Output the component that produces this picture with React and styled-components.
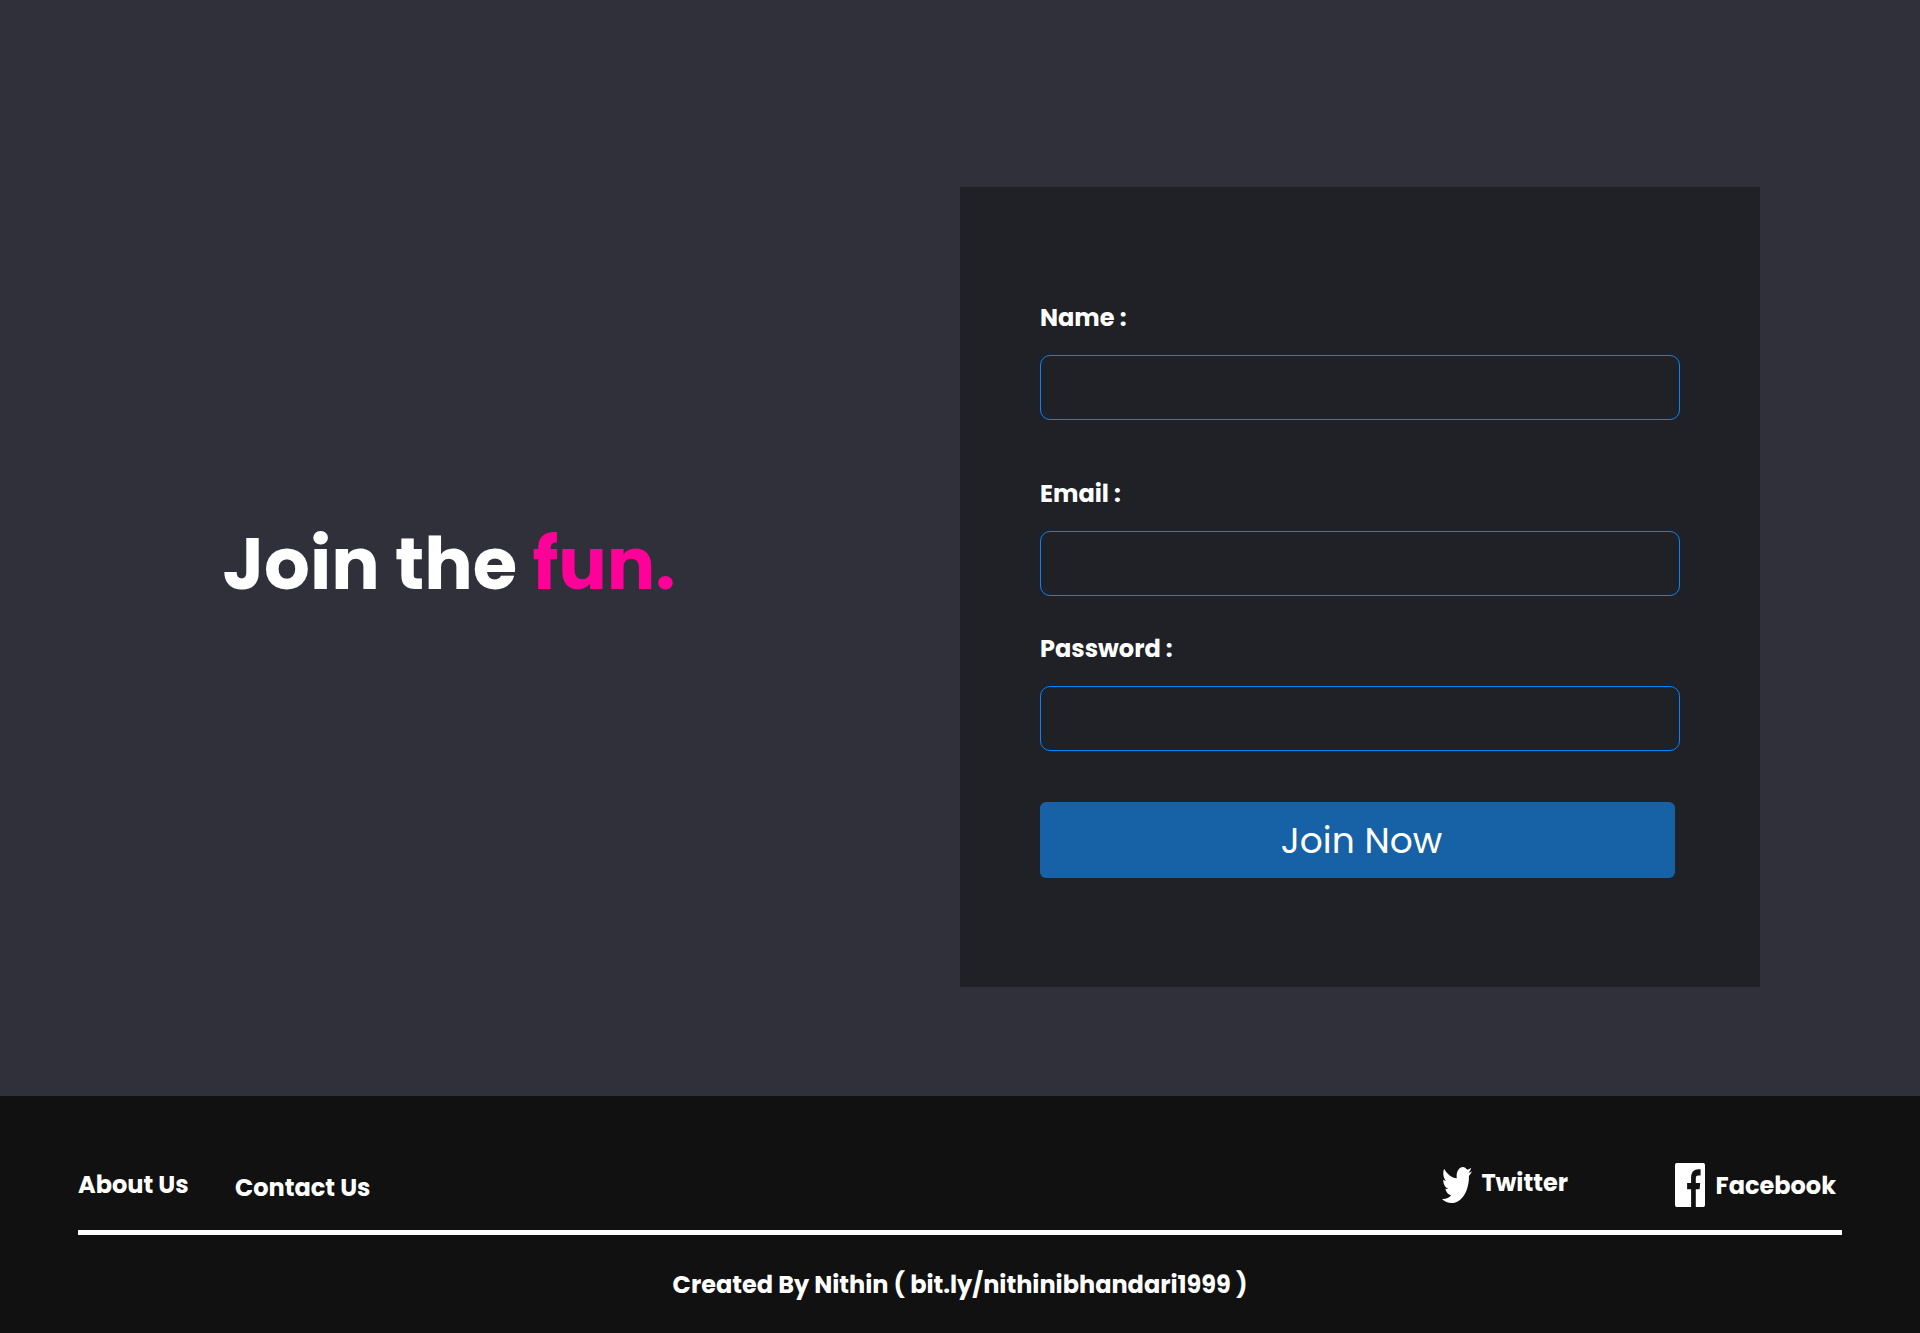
import React from 'react';
import styled, { createGlobalStyle } from 'styled-components';

const GlobalStyle = createGlobalStyle`
  * { box-sizing: border-box; }
  body { margin: 0; background: #30303a; }
`;

const Page = styled.div`
  width: 1920px;
  height: 1333px;
  display: flex;
  flex-direction: column;
  overflow: hidden;
  color: #fff;
  background: #30303a;
  font-family: Poppins, Inter, sans-serif;
  font-size: 24px;
  font-weight: 700;
  line-height: 36px;
`;

const Main = styled.main`
  height: 1096px;
  display: flex;
  align-items: flex-start;
  padding: 187px 160px 0 222.5px;
`;

const Headline = styled.h1`
  flex: 1;
  margin: 323px 0 0;
  font-size: 72px;
  font-weight: 700;
  line-height: 108px;
  white-space: nowrap;
`;

const Accent = styled.span`
  color: #ff0099;
`;

const Card = styled.form`
  width: 800px;
  height: 800px;
  padding: 113px 80px 0;
  background: #202126;
`;

const Field = styled.label`
  display: flex;
  flex-direction: column;
  gap: 19px;
  margin-bottom: ${(p) => p.$after}px;
`;

const Input = styled.input`
  width: 100%;
  height: 65px;
  padding: 0 20px;
  color: #fff;
  font: inherit;
  background: transparent;
  border: 1px solid #0085ff;
  border-radius: 10px;
  outline: none;
`;

const Submit = styled.button`
  display: block;
  width: 635px;
  height: 76px;
  padding: 2px 0 0 8px;
  border: 0;
  border-radius: 6px;
  color: #fff;
  background: #1762a7;
  font-family: inherit;
  font-size: 36px;
  font-weight: 400;
  line-height: 54px;
`;

const Footer = styled.footer`
  flex: 1;
  display: flex;
  flex-direction: column;
  padding: 0 78px;
  background: #111111;
`;

const FooterRow = styled.div`
  height: 134px;
  display: flex;
  align-items: flex-start;
  justify-content: space-between;
  padding-right: 6px;
`;

const Group = styled.nav`
  display: flex;
  align-items: flex-start;
  gap: ${(p) => p.$gap}px;
`;

const Link = styled.a`
  display: flex;
  align-items: flex-start;
  gap: ${(p) => p.$gap || 0}px;
  padding-top: ${(p) => p.$top}px;
  white-space: nowrap;

  svg {
    display: block;
    flex: none;
    margin-top: ${(p) => p.$iconTop || 0}px;
  }
`;

const LinkText = styled.span`
  padding-top: ${(p) => p.$top}px;
`;

const Rule = styled.hr`
  width: 100%;
  height: 5px;
  margin: 0;
  border: 0;
  background: #fff;
`;

const Credit = styled.p`
  margin: 32px 0 0;
  text-align: center;
`;

const TwitterIcon = () => (
  <svg width="30" height="36" viewBox="0 48 512 416" preserveAspectRatio="none" fill="#fff">
    <path d="M459.37 151.716c.325 4.548.325 9.097.325 13.645 0 138.72-105.583 298.558-298.558 298.558-59.452 0-114.68-17.219-161.137-47.106 8.447.974 16.568 1.299 25.34 1.299 49.055 0 94.213-16.568 130.274-44.832-46.132-.975-84.792-31.188-98.112-72.772 6.498.974 12.995 1.624 19.818 1.624 9.421 0 18.843-1.3 27.614-3.573-48.081-9.747-84.143-51.98-84.143-102.985v-1.299c13.969 7.797 30.214 12.67 47.431 13.319-28.264-18.843-46.781-51.005-46.781-87.391 0-19.492 5.197-37.36 14.294-52.954 51.655 63.675 129.3 105.258 216.365 109.807-1.624-7.797-2.599-15.918-2.599-24.04 0-57.828 46.782-104.934 104.934-104.934 30.213 0 57.502 12.67 76.67 33.137 23.715-4.548 46.456-13.32 66.599-25.34-7.798 24.366-24.366 44.833-46.132 57.827 21.117-2.273 41.584-8.122 60.426-16.243-14.292 20.791-32.161 39.308-52.628 54.253z" />
  </svg>
);

const FacebookIcon = () => (
  <svg width="30" height="44" viewBox="0 0 30 44" fill="#fff">
    <path d="M1.6 0H28.4Q30 0 30 2V42Q30 44 28.4 44H20.8V26.2H24.6L25.2 19.9H20.8V16.2C20.8 13.6 21.3 12.6 23.2 12.6H25.6V6.3C20 5.4 16.1 8 16.1 14.8V19.9H12.1V26.2H16.1V44H1.6Q0 44 0 42V2Q0 0 1.6 0Z" />
  </svg>
);

const fields = [
  { label: 'Name :', type: 'text', after: 56 },
  { label: 'Email :', type: 'email', after: 35 },
  { label: 'Password :', type: 'password', after: 51 },
];

export default function App() {
  return (
    <Page>
      <GlobalStyle />
      <Main>
        <Headline>
          Join the <Accent>fun.</Accent>
        </Headline>
        <Card>
          {fields.map((f) => (
            <Field key={f.label} $after={f.after}>
              {f.label}
              <Input type={f.type} />
            </Field>
          ))}
          <Submit type="button">Join Now</Submit>
        </Card>
      </Main>
      <Footer>
        <FooterRow>
          <Group $gap={46.4}>
            <Link $top={71}>About Us</Link>
            <Link $top={74}>Contact Us</Link>
          </Group>
          <Group $gap={107}>
            <Link $top={67} $gap={9.5} $iconTop={4}>
              <TwitterIcon />
              <LinkText $top={2}>Twitter</LinkText>
            </Link>
            <Link $top={67} $gap={10.6}>
              <FacebookIcon />
              <LinkText $top={4.6}>Facebook</LinkText>
            </Link>
          </Group>
        </FooterRow>
        <Rule />
        <Credit>Created By Nithin ( bit.ly/nithinibhandari1999 )</Credit>
      </Footer>
    </Page>
  );
}
